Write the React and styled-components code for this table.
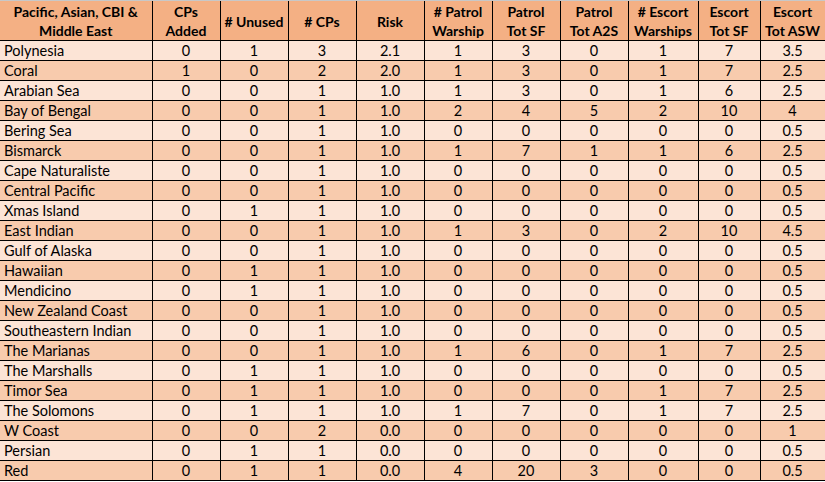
import React from "react";
import styled, { createGlobalStyle } from "styled-components";

const Global = createGlobalStyle`
  html, body { margin: 0; padding: 0; background: #ffffff; }
  body { font-family: Lato, "Open Sans", "Liberation Sans", sans-serif; }
`;

const Sheet = styled.div`
  width: 825px;
  border-top: 1px solid #c8c8c8;
`;

const Table = styled.table`
  border-collapse: collapse;
  table-layout: fixed;
  width: 825px;
  font-size: 14.5px;
  color: #000;
`;

const HeadCell = styled.th`
  background: #f4b084;
  font-weight: 700;
  font-size: 14px;
  height: 38px;
  padding: 1px 1px 0;
  line-height: 19px;
  text-align: center;
  border: 1px solid #000;
  border-top: none;
  white-space: nowrap;
  &:first-child { border-left: none; }
`;

const Row = styled.tr`
  background: ${(p) => (p.$odd ? "#f8cbad" : "#fce4d6")};
`;

const Cell = styled.td`
  height: 18px;
  padding: 1px 4px 0;
  line-height: 18px;
  text-align: ${(p) => (p.$left ? "left" : "center")};
  border: 1px solid #000;
  white-space: nowrap;
  overflow: hidden;
  &:first-child { border-left: none; }
`;

const widths = [152, 68, 68, 68, 68, 68, 68, 68, 70, 62, 65];

const headers = [
  ["Pacific, Asian, CBI &", "Middle East"],
  ["CPs", "Added"],
  ["# Unused"],
  ["# CPs"],
  ["Risk"],
  ["# Patrol", "Warship"],
  ["Patrol", "Tot SF"],
  ["Patrol", "Tot A2S"],
  ["# Escort", "Warships"],
  ["Escort", "Tot SF"],
  ["Escort", "Tot ASW"],
];

const rows = [
  ["Polynesia", 0, 1, 3, "2.1", 1, 3, 0, 1, 7, "3.5"],
  ["Coral", 1, 0, 2, "2.0", 1, 3, 0, 1, 7, "2.5"],
  ["Arabian Sea", 0, 0, 1, "1.0", 1, 3, 0, 1, 6, "2.5"],
  ["Bay of Bengal", 0, 0, 1, "1.0", 2, 4, 5, 2, 10, "4"],
  ["Bering Sea", 0, 0, 1, "1.0", 0, 0, 0, 0, 0, "0.5"],
  ["Bismarck", 0, 0, 1, "1.0", 1, 7, 1, 1, 6, "2.5"],
  ["Cape Naturaliste", 0, 0, 1, "1.0", 0, 0, 0, 0, 0, "0.5"],
  ["Central Pacific", 0, 0, 1, "1.0", 0, 0, 0, 0, 0, "0.5"],
  ["Xmas Island", 0, 1, 1, "1.0", 0, 0, 0, 0, 0, "0.5"],
  ["East Indian", 0, 0, 1, "1.0", 1, 3, 0, 2, 10, "4.5"],
  ["Gulf of Alaska", 0, 0, 1, "1.0", 0, 0, 0, 0, 0, "0.5"],
  ["Hawaiian", 0, 1, 1, "1.0", 0, 0, 0, 0, 0, "0.5"],
  ["Mendicino", 0, 1, 1, "1.0", 0, 0, 0, 0, 0, "0.5"],
  ["New Zealand Coast", 0, 0, 1, "1.0", 0, 0, 0, 0, 0, "0.5"],
  ["Southeastern Indian", 0, 0, 1, "1.0", 0, 0, 0, 0, 0, "0.5"],
  ["The Marianas", 0, 0, 1, "1.0", 1, 6, 0, 1, 7, "2.5"],
  ["The Marshalls", 0, 1, 1, "1.0", 0, 0, 0, 0, 0, "0.5"],
  ["Timor Sea", 0, 1, 1, "1.0", 0, 0, 0, 1, 7, "2.5"],
  ["The Solomons", 0, 1, 1, "1.0", 1, 7, 0, 1, 7, "2.5"],
  ["W Coast", 0, 0, 2, "0.0", 0, 0, 0, 0, 0, "1"],
  ["Persian", 0, 1, 1, "0.0", 0, 0, 0, 0, 0, "0.5"],
  ["Red", 0, 1, 1, "0.0", 4, 20, 3, 0, 0, "0.5"],
];

export default function App() {
  return (
    <>
      <Global />
      <Sheet>
        <Table>
          <colgroup>
            {widths.map((w, i) => (
              <col key={i} style={{ width: w }} />
            ))}
          </colgroup>
          <thead>
            <tr>
              {headers.map((h, i) => (
                <HeadCell key={i}>
                  {h.map((line, j) => (
                    <React.Fragment key={j}>
                      {j > 0 && <br />}
                      {line}
                    </React.Fragment>
                  ))}
                </HeadCell>
              ))}
            </tr>
          </thead>
          <tbody>
            {rows.map((r, i) => (
              <Row key={i} $odd={i % 2 === 1}>
                {r.map((v, j) => (
                  <Cell key={j} $left={j === 0}>
                    {v}
                  </Cell>
                ))}
              </Row>
            ))}
          </tbody>
        </Table>
      </Sheet>
    </>
  );
}
